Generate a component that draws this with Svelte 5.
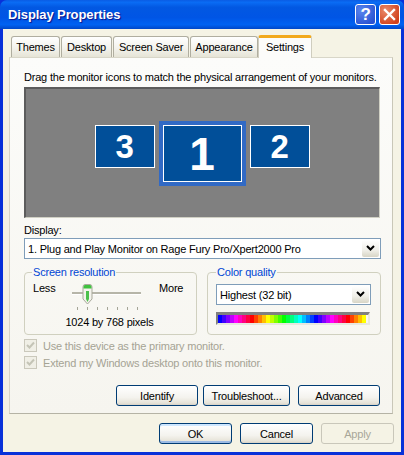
<script>
  const tabs = [
    { label: 'Themes', w: 49 },
    { label: 'Desktop', w: 51 },
    { label: 'Screen Saver', w: 76 },
    { label: 'Appearance', w: 68 },
    { label: 'Settings', w: 54, active: true }
  ];
  const hues = Array.from({ length: 37 }, (_, i) => 240 + i * 15);
  const ticks = [0, 1, 2, 3, 4, 5, 6];
  const checks = ['Use this device as the primary monitor.', 'Extend my Windows desktop onto this monitor.'];
</script>

<div class="window">
  <header class="titlebar">
    <span class="title">Display Properties</span>
    <div class="caps">
      <span class="cap help">?</span>
      <span class="cap close">
        <svg viewBox="0 0 21 21" width="21" height="21">
          <path d="M6 6 L15 15 M15 6 L6 15" stroke="#fff" stroke-width="2.4" stroke-linecap="square" fill="none" />
        </svg>
      </span>
    </div>
  </header>

  <div class="body">
    <div class="tabs">
      {#each tabs as t}
        <div class="tab" class:active={t.active} style="width:{t.w}px">{t.label}</div>
      {/each}
    </div>

    <div class="panel">
      <p class="hint">Drag the monitor icons to match the physical arrangement of your monitors.</p>

      <div class="desk">
        <div class="mon small">3</div>
        <div class="sel"><div class="mon big">1</div></div>
        <div class="mon small">2</div>
      </div>

      <label class="disp-label" for="disp">Display:</label>
      <div class="combo wide" id="disp">
        <span>1. Plug and Play Monitor on Rage Fury Pro/Xpert2000 Pro</span>
        <span class="drop">
          <svg viewBox="0 0 9 7" width="9" height="7"><path d="M1 1 L4.5 4.5 L8 1" stroke="#000" stroke-width="2" fill="none" /></svg>
        </span>
      </div>

      <div class="groups">
        <fieldset class="res">
          <legend>Screen resolution</legend>
          <div class="slider-row">
            <span>Less</span>
            <div class="slider">
              <div class="track"></div>
              <svg class="thumb" viewBox="0 0 11 21" width="11" height="21">
                <path d="M1 3 Q1 .5 3 .5 H8 Q10 .5 10 3 V15 L5.5 20 L1 15 Z" fill="#f4f3ec" stroke="#a9a99c" />
                <path d="M1.5 3 Q1.5 1 3 1 H8 Q9.5 1 9.5 3 V4.500 H1.500 Z" fill="#3fc13f" />
                <path d="M4 7 H7 V15 L5.5 18 L4 15 Z" fill="#4cc04c" />
              </svg>
              <div class="ticks">
                {#each ticks as t}<i></i>{/each}
              </div>
            </div>
            <span>More</span>
          </div>
          <div class="res-text">1024 by 768 pixels</div>
        </fieldset>

        <fieldset class="color">
          <legend>Color quality</legend>
          <div class="combo">
            <span>Highest (32 bit)</span>
            <span class="drop">
              <svg viewBox="0 0 9 7" width="9" height="7"><path d="M1 1 L4.5 4.5 L8 1" stroke="#000" stroke-width="2" fill="none" /></svg>
            </span>
          </div>
          <div class="spectrum">
            {#each hues as h}
              <i style="background:hsl({h % 360},100%,50%)"></i>
            {/each}
          </div>
        </fieldset>
      </div>

      <div class="checks">
        {#each checks as c}
          <div class="check">
            <span class="box">
              <svg viewBox="0 0 13 13" width="13" height="13"><path d="M3 6 L5.500 8.500 L10 3.500" stroke="#c4c4b6" stroke-width="2" fill="none" /></svg>
            </span>
            <span>{c}</span>
          </div>
        {/each}
      </div>

      <div class="actions">
        <button class="identify">Identify</button>
        <button class="trouble">Troubleshoot...</button>
        <button class="advanced">Advanced</button>
      </div>
    </div>

    <div class="footer">
      <button class="default">OK</button>
      <button>Cancel</button>
      <button disabled>Apply</button>
    </div>
  </div>
</div>

<style>
  :global(body) {
    margin: 0;
    background: #fff;
  }
  .window {
    width: 404px;
    height: 455px;
    display: flex;
    flex-direction: column;
    font-family: "Liberation Sans", Arial, sans-serif;
    font-size: 11px;
    letter-spacing: -0.2px;
    color: #000;
    background: #0831d9;
    overflow: hidden;
  }
  .titlebar {
    height: 29px;
    flex: none;
    display: flex;
    align-items: center;
    justify-content: space-between;
    padding: 0 4px 0 8px;
    border-radius: 7px 7px 0 0;
    background: linear-gradient(180deg, #0a5ce4 0%, #0a6cf4 8%, #0258e2 25%, #0055e5 60%, #0062f2 85%, #0047c8 100%);
  }
  .title {
    color: #fff;
    font-weight: 700;
    font-size: 13px;
    letter-spacing: -0.1px;
    text-shadow: 1px 1px 1px #0f1089;
  }
  .caps {
    display: flex;
    gap: 3px;
  }
  .cap {
    width: 21px;
    height: 21px;
    box-sizing: border-box;
    border: 1px solid #fff;
    border-radius: 3px;
    display: flex;
    align-items: center;
    justify-content: center;
    color: #fff;
    font-weight: 700;
    font-size: 17px;
  }
  .cap svg {
    margin: -1px;
  }
  .help {
    background: radial-gradient(circle at 30% 30%, #5a86ee, #2a52d2 80%);
  }
  .close {
    background: radial-gradient(circle at 30% 30%, #ea8a6a, #d0401c 80%);
  }
  .body {
    flex: 1;
    margin: 0 3px 3px;
    background: #f5f3e5;
    display: flex;
    flex-direction: column;
    padding: 6px 8px 0 6px;
    min-height: 0;
  }
  .tabs {
    display: flex;
    height: 22px;
    align-items: flex-end;
    padding-left: 2px;
    gap: 1px;
    position: relative;
    z-index: 1;
  }
  .tab {
    box-sizing: border-box;
    height: 21px;
    border: 1px solid #b0aea0;
    border-bottom: none;
    border-radius: 3px 3px 0 0;
    background: linear-gradient(180deg, #fff, #f2f1ea 60%, #e6e4d6);
    display: flex;
    align-items: center;
    justify-content: center;
    white-space: nowrap;
  }
  .tab.active {
    height: 23px;
    margin-left: -1px;
    margin-bottom: -1px;
    background: #fcfcfa;
    border: 1px solid #cfcdbf;
    border-top: 3px solid #f2a91c;
    border-bottom: none;
    padding-bottom: 3px;
  }
  .panel {
    box-sizing: border-box;
    height: 357px;
    flex: none;
    border: 1px solid #d8d6c8;
    border-right-color: #c9c7b8;
    border-bottom-color: #b5b3a5;
    background: linear-gradient(180deg, #fcfcfa, #f6f5ef);
    padding: 0 11px 0 14px;
    display: flex;
    flex-direction: column;
  }
  .hint {
    margin: 12px 0 3px;
    height: 14px;
    line-height: 14px;
    white-space: nowrap;
  }
  .desk {
    box-sizing: border-box;
    height: 131px;
    width: 356px;
    flex: none;
    background: #808080;
    border: 1px solid #d0d0c4;
    border-top: 2px solid #5c5c5c;
    border-left: 2px solid #5c5c5c;
    display: flex;
    align-items: flex-start;
    justify-content: center;
    gap: 4px;
    padding-top: 32px;
    padding-right: 1px;
  }
  .mon {
    box-sizing: border-box;
    background: #014f99;
    border: 1px solid #fff;
    color: #fff;
    font-weight: 700;
    display: flex;
    align-items: center;
    justify-content: center;
  }
  .small {
    width: 60px;
    height: 43px;
    margin-top: 4px;
    font-size: 33px;
  }
  .big {
    width: 79px;
    height: 57px;
    font-size: 46px;
  }
  .sel {
    border: 4px solid #316ac5;
  }
  .disp-label {
    margin-top: 5px;
    height: 15px;
    line-height: 14px;
  }
  .combo {
    box-sizing: border-box;
    height: 21px;
    border: 1px solid #7f9db9;
    background: #fff;
    display: flex;
    align-items: center;
    justify-content: space-between;
    padding-left: 3px;
    white-space: nowrap;
  }
  .combo.wide {
    width: 357px;
    margin-top: 0;
  }
  .drop {
    width: 17px;
    height: 17px;
    margin-right: 1px;
    border-radius: 2px;
    background: linear-gradient(180deg, #fff, #f0efe8 60%, #d8d5c6);
    display: flex;
    align-items: center;
    justify-content: center;
  }
  .groups {
    display: flex;
    gap: 10px;
    margin-top: 6px;
  }
  fieldset {
    margin: 0;
    box-sizing: border-box;
    height: 70px;
    border: 1px solid #d0d0bf;
    border-radius: 4px;
    padding: 0;
    min-width: 0;
  }
  legend {
    color: #0046d5;
    margin-left: 7px;
    padding: 0 1px;
    line-height: 14px;
  }
  .res {
    width: 173px;
  }
  .color {
    width: 174px;
    padding: 5px 9px 0 8px;
  }
  .color legend {
    margin-left: 0;
  }
  .slider-row {
    display: grid;
    grid-template-columns: 39px 87px auto;
    padding: 3px 0 0 8px;
    height: 33px;
  }
  .slider {
    position: relative;
    width: 69px;
    height: 33px;
    margin-top: -3px;
  }
  .track {
    position: absolute;
    left: 0;
    right: 0;
    top: 13px;
    height: 2px;
    background: #b6b5a8;
    border-bottom: 1px solid #fff;
  }
  .thumb {
    position: absolute;
    left: 10px;
    top: 5px;
  }
  .ticks {
    position: absolute;
    left: 5px;
    right: 3px;
    top: 28px;
    display: flex;
    justify-content: space-between;
  }
  .ticks i {
    width: 1px;
    height: 3px;
    background: #a5a598;
  }
  .res-text {
    text-align: center;
    line-height: 14px;
    padding-right: 2px;
  }
  .spectrum {
    box-sizing: border-box;
    width: 154px;
    height: 13px;
    margin-top: 7px;
    display: flex;
    overflow: hidden;
    border: 2px solid #808080;
    border-right-color: #e8e8e0;
    border-bottom-color: #e8e8e0;
    border-width: 3px 2px 2px 2px;
  }
  .spectrum i {
    width: 4px;
    flex: none;
  }
  .checks {
    margin-top: 4px;
    display: flex;
    flex-direction: column;
    gap: 4px;
    color: #a5a394;
  }
  .check {
    display: flex;
    align-items: center;
    gap: 6px;
    height: 13px;
  }
  .box {
    width: 13px;
    height: 13px;
    box-sizing: border-box;
    border: 1px solid #cac8bb;
    background: #f0efe6;
    display: flex;
  }
  .box svg {
    margin: -1px;
  }
  .actions {
    display: flex;
    justify-content: flex-end;
    margin-top: 16px;
    padding-right: 1px;
  }
  .identify {
    width: 82px;
  }
  .trouble {
    width: 87px;
    margin: 0 8px 0 5px;
  }
  .advanced {
    width: 82px;
  }
  button {
    box-sizing: border-box;
    height: 21px;
    padding: 0;
    font: inherit;
    letter-spacing: inherit;
    color: #000;
    border: 1px solid #003c74;
    border-radius: 3px;
    background: linear-gradient(180deg, #fff, #f4f3ee 60%, #e6e3d8 90%, #d6d0c5);
  }
  .footer {
    display: flex;
    justify-content: flex-end;
    gap: 8px;
    margin-top: 9px;
    margin-right: -1px;
  }
  .footer button {
    width: 73px;
  }
  .default {
    box-shadow: inset 0 -2px 0 #9dbbe4, inset 0 2px 0 #cee7ff;
  }
  button:disabled {
    color: #a8a698;
    border-color: #c9c7ba;
    background: #f5f3e5;
  }
</style>
